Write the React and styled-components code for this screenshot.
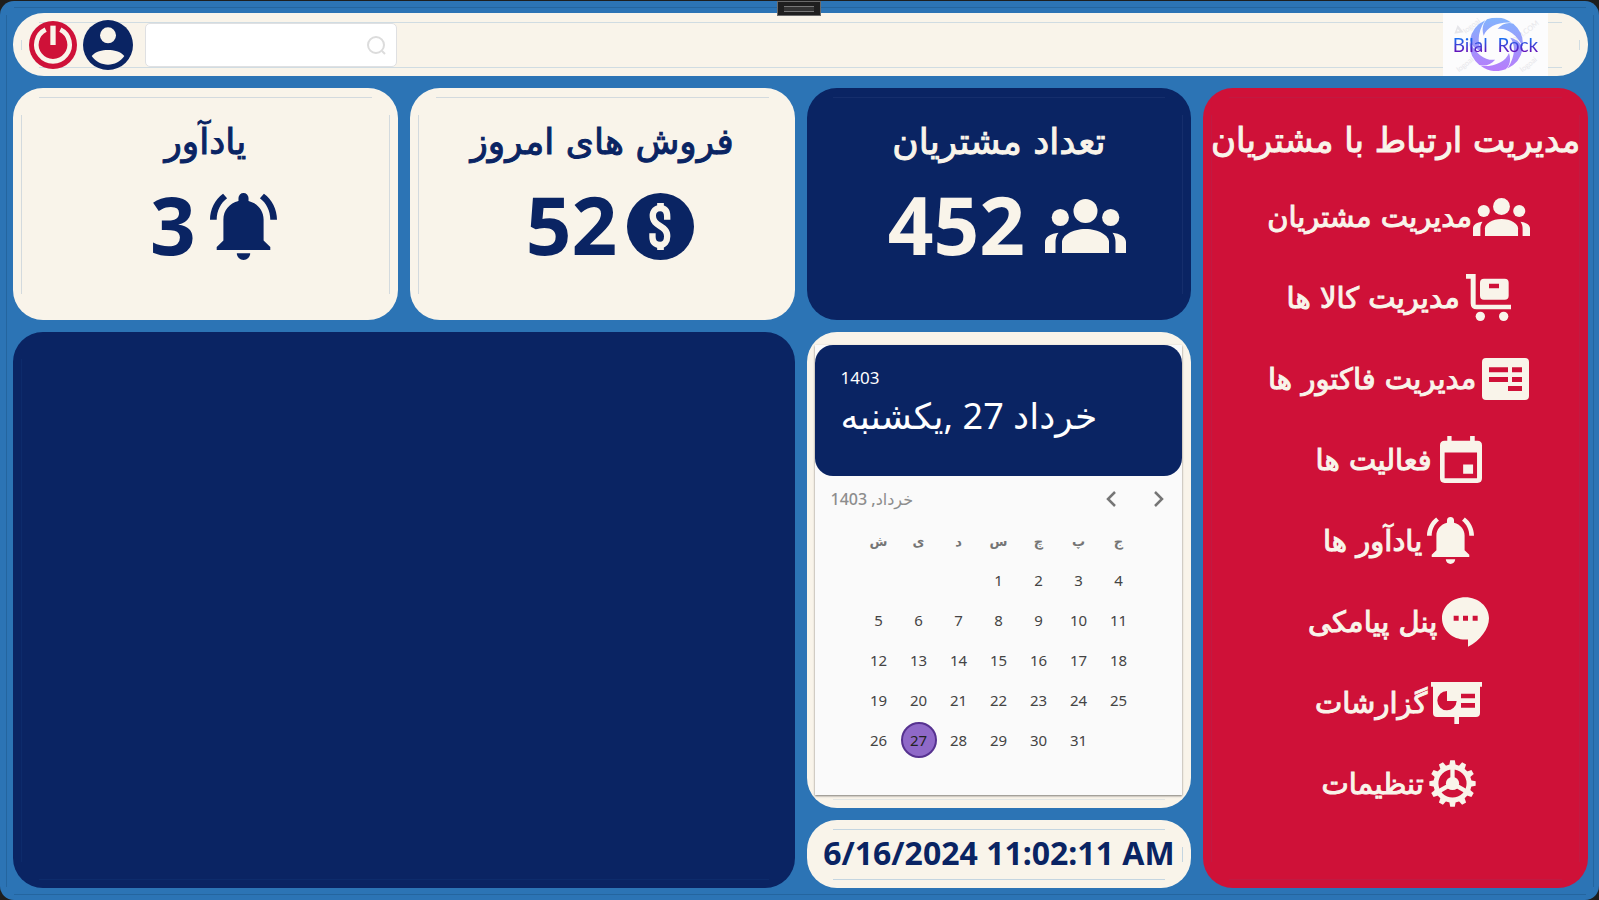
import React from "react";
import styled, { createGlobalStyle, css } from "styled-components";

const blue = "#2c74b5";
const navy = "#0a2463";
const cream = "#f9f4ea";
const red = "#cf1138";
const latin = `"Noto Sans", "Open Sans", "DejaVu Sans", sans-serif`;

const GlobalStyle = createGlobalStyle`
  * { box-sizing: border-box; }
  html { background: #1e1e1e; }
  body { margin: 0; font-family: ${latin}; }
  button { border: 0; padding: 0; background: none; font: inherit; color: inherit; cursor: pointer; }
  svg { display: block; }
`;

const hair = (color, size) => `linear-gradient(${color}, ${color}) no-repeat ${size}`;

const edgeLines = ({ $line, $edges = "tblr" }) => {
  const across = "calc(100% - 36px) 1px";
  const down = "1px calc(100% - 36px)";
  const at = {
    t: hair($line, `center top / ${across}`),
    b: hair($line, `center bottom / ${across}`),
    l: hair($line, `left center / ${down}`),
    r: hair($line, `right center / ${down}`),
  };
  return css`
    &::before {
      content: "";
      position: absolute;
      inset: 9px 8px 8px;
      pointer-events: none;
      background: ${[...$edges].map((e) => at[e]).join(", ")};
    }
  `;
};

const Shell = styled.div`
  position: relative;
  min-height: calc(100vh - 1px);
  margin-top: 1px;
  padding: 12px 11px 12px 13px;
  border-radius: 14px;
  background: ${blue};
  display: grid;
  grid-template-columns: repeat(4, minmax(0, 1fr));
  grid-template-rows: 63px 232px minmax(476px, 1fr) 68px;
  gap: 12px;
  &::after {
    content: "";
    position: absolute;
    inset: 6px 5px 5px 6px;
    pointer-events: none;
    background: ${hair("#24659f", "center top / calc(100% - 16px) 1px")},
      ${hair("#24659f", "center bottom / calc(100% - 16px) 1px")},
      ${hair("#24659f", "left center / 1px calc(100% - 16px)")},
      ${hair("#24659f", "right center / 1px calc(100% - 16px)")};
  }
`;

const Grip = styled.div`
  position: absolute;
  top: 0;
  left: calc(50% - 23px);
  z-index: 2;
  width: 44px;
  height: 15px;
  border: 1px solid #6a6a6a;
  background: #1f1f1f;
  display: grid;
  place-items: center;
  &::after {
    content: "";
    width: 30px;
    height: 4px;
    border: solid #777;
    border-width: 1px 0;
    background: #333;
  }
`;

const Panel = styled.section`
  position: relative;
  border-radius: 30px;
  background: ${(p) => p.$bg};
  color: ${(p) => p.$fg};
  ${edgeLines}
`;

const Header = styled.header`
  grid-column: 1 / -1;
  position: relative;
  border-radius: 31px;
  background: ${cream};
  padding: 0 40px 0 16px;
  display: flex;
  align-items: center;
  gap: 6px;
  ${edgeLines}
`;

const IconButton = styled.button`
  position: relative;
  flex: none;
  svg { width: ${(p) => p.$size}px; height: ${(p) => p.$size}px; }
`;

const SearchBox = styled.label`
  position: relative;
  display: flex;
  align-items: center;
  width: 252px;
  height: 44px;
  margin: 0 auto 0 6px;
  padding: 0 8px;
  border: 1px solid #dfe0e2;
  border-radius: 5px;
  background: #fff;
  input { flex: 1; min-width: 0; border: 0; outline: 0; background: none; font: 16px ${latin}; }
`;

const Logo = styled.div`
  position: relative;
  width: 105px;
  height: 63px;
  background: #fcfcfd;
  display: grid;
  place-items: center;
  svg { position: absolute; inset: 0; }
`;

const LogoName = styled.span`
  position: relative;
  font: 19px/24px Lato, sans-serif;
  white-space: pre;
  color: transparent;
  background: linear-gradient(#1673f5 20%, #6610b8 80%);
  background-clip: text;
`;

const StatPanel = styled(Panel)`
  display: flex;
  flex-direction: column;
  align-items: center;
  padding-top: 24px;
`;

const StatTitle = styled.h2`
  margin: 0;
  font: 36px/60px "DejaVu Sans", sans-serif;
  -webkit-text-stroke: 1px currentColor;
  white-space: nowrap;
`;

const StatRow = styled.div`
  height: 108px;
  display: flex;
  align-items: center;
  gap: ${(p) => p.$gap}px;
  padding-left: 16px;
`;

const StatNumber = styled.span`
  padding-bottom: 4px;
  font: bold 80px/104px ${latin};
`;

const Sidebar = styled(Panel).attrs({ as: "nav" })`
  grid-column: 4;
  grid-row: 2 / 5;
  padding-top: 22px;
  display: flex;
  flex-direction: column;
  align-items: center;
`;

const SidebarTitle = styled.h1`
  margin: 0 0 6px;
  font: 34px/60px "DejaVu Sans", sans-serif;
  -webkit-text-stroke: 1px currentColor;
  white-space: nowrap;
`;

const MenuItem = styled.button`
  height: 81px;
  padding-left: 6px;
  display: flex;
  align-items: center;
  gap: ${(p) => p.$gap}px;
  font: 29px/40px "DejaVu Sans", sans-serif;
  -webkit-text-stroke: 1px currentColor;
  white-space: nowrap;
`;

const CalendarPanel = styled(Panel)`
  grid-column: 3;
  padding: 13px 9px 13px 8px;
`;

const Calendar = styled.div`
  position: relative;
  height: 450px;
  background: #fafafa;
  box-shadow: 0 1px 2px rgba(0, 0, 0, 0.5);
  color: #444;
`;

const CalendarHead = styled.div`
  height: 131px;
  padding: 20px 26px;
  border-radius: 18px;
  background: ${navy};
  color: #fff;
`;

const Year = styled.div`
  font: 17px/26px ${latin};
`;

const FullDate = styled.div`
  width: max-content;
  direction: rtl;
  font: 36px/50px "Noto Sans", "DejaVu Sans", sans-serif;
  white-space: nowrap;
`;

const MonthBar = styled.div`
  height: 46px;
  padding: 0 16px;
  display: flex;
  align-items: center;
  gap: 30px;
  color: #8d8d8d;
  strong { direction: rtl; margin-right: auto; font: 500 16px/24px ${latin}; }
`;

const Days = styled.table`
  width: 280px;
  margin: 0 auto 0 44px;
  border-collapse: collapse;
  table-layout: fixed;
  th { height: 38px; padding: 0; font: bold 13px/20px ${latin}; color: #757575; }
  td { height: 40px; padding: 0; text-align: center; font: 15px/20px ${latin}; }
`;

const Today = styled.span`
  display: grid;
  place-items: center;
  width: 36px;
  height: 36px;
  margin: auto;
  border: 2px solid #563290;
  border-radius: 50%;
  background: #8f69c8;
  color: #222;
`;

const Clock = styled(Panel)`
  grid-column: 3;
  display: grid;
  place-items: center;
  padding-bottom: 2px;
  font: bold 32px/40px ${latin};
  white-space: nowrap;
`;

const Chart = styled(Panel)`
  grid-column: 1 / 3;
  grid-row: 3 / 5;
`;

const People = ({ w = 81 }) => (
  <svg width={w} height={(w * 2) / 3} viewBox="0 0 81 54" fill="currentColor" aria-hidden="true">
    <circle cx="40.5" cy="12" r="12" />
    <circle cx="15.3" cy="18.5" r="8.6" />
    <circle cx="65.7" cy="18.5" r="8.6" />
    <path d="M17 54V43C17 37 27 30 40.500 30S64 37 64 43V54Z" />
    <path d="M0 54V43C0 38 6 34.500 13.500 33.800C11.300 37 10.500 40 10.500 43V54Z" />
    <path d="M81 54V43C81 38 75 34.500 67.500 33.800C69.700 37 70.500 40 70.500 43V54Z" />
  </svg>
);

const Bell = ({ w = 67 }) => (
  <svg width={w} height={w} viewBox="0 0 200 200" fill="currentColor" aria-hidden="true">
    <path d="M85 24V15A15 15 0 0 1 115 15V24C142 31 160 52 160 79V142L180 161V170H20V161L40 142V79C40 52 58 31 85 24Z" />
    <path d="M80 180H120A20 20 0 0 1 80 180Z" />
    <path d="M0 80C0 49 15 19 39 2L51 16C32 30 20 54 20 80Z" />
    <path d="M200 80C200 49 185 19 161 2L149 16C168 30 180 54 180 80Z" />
  </svg>
);

const Coin = () => (
  <svg width="67" height="67" viewBox="0 0 200 200" aria-hidden="true">
    <circle cx="100" cy="100" r="100" fill={navy} />
    <path d="M90 30H110V50H90ZM90 150H110V170H90Z" fill={cream} />
    <path d="M120 80V70C120 51 111 45 99 45C86 45 77 54 77 68C77 102 120 95 120 129C120 145 112 155 99 155C84 155 76 146 76 131V120" fill="none" stroke={cream} strokeWidth="19" />
  </svg>
);

const Trolley = () => (
  <svg width="45" height="47" viewBox="0 0 135 141" fill="currentColor" aria-hidden="true">
    <path d="M0 0H29V92H135V106H32Q14 106 14 88V14H0Z" />
    <path fillRule="evenodd" d="M54 14H116Q128 14 128 26V65Q128 77 116 77H54Q42 77 42 65V26Q42 14 54 14ZM69 29V43H99V29Z" />
    <circle cx="43" cy="127" r="14" />
    <circle cx="113" cy="127" r="14" />
  </svg>
);

const Invoice = () => (
  <svg width="47" height="42" viewBox="0 0 141 126" fill="currentColor" aria-hidden="true">
    <path fillRule="evenodd" d="M12 0H129Q141 0 141 12V114Q141 126 129 126H12Q0 126 0 114V12Q0 0 12 0ZM21 28V43H78V28ZM90 28V43H120V28ZM21 57V72H78V57ZM90 57V72H120V57ZM78 84V99H120V84Z" />
  </svg>
);

const EventIcon = () => (
  <svg width="42" height="47" viewBox="0 0 127 142" fill="currentColor" aria-hidden="true">
    <path fillRule="evenodd" d="M22 0H35V14H91V0H105V14H113Q127 14 127 28V128Q127 142 113 142H14Q0 142 0 128V28Q0 14 14 14H22ZM14 50V128H112V50ZM70 86H100V114H70Z" />
  </svg>
);

const Chat = () => (
  <svg width="47" height="50" viewBox="0 0 141 149" fill="currentColor" aria-hidden="true">
    <path fillRule="evenodd" d="M70 0C109 0 141 28 141 63C141 95 115 129 78 149V127H70C31 127 0 98 0 63C0 28 31 0 70 0ZM35 56V71H50V56ZM63 56V71H78V56ZM92 56V71H107V56Z" />
  </svg>
);

const Board = () => (
  <svg width="51" height="42" viewBox="0 0 153 126" fill="currentColor" aria-hidden="true">
    <path fillRule="evenodd" d="M0 0H153V14H147V93Q147 105 135 105H84V126H70V105H18Q6 105 6 93V14H0ZM48 27A29 29 0 1 0 77 57H48ZM90 35V49H132V35ZM90 63V77H132V63Z" />
  </svg>
);

const Gear = () => (
  <svg width="47" height="47" viewBox="-71 -71 142 142" fill="none" stroke="currentColor" aria-hidden="true">
    <circle r="50" strokeWidth="15" />
    <circle r="20" fill="currentColor" stroke="none" />
    {[0, 120, 240].map((a) => (
      <path key={a} d="M0 -10V-48" strokeWidth="13" transform={`rotate(${a})`} />
    ))}
    {Array.from({ length: 12 }, (_, i) => (
      <path key={i} d="M-10 -54L-7 -70H7L10 -54Z" fill="currentColor" stroke="none" transform={`rotate(${i * 30})`} />
    ))}
  </svg>
);

const Power = () => (
  <svg viewBox="-72 -72 144 144" aria-hidden="true">
    <circle r="72" fill={red} />
    <path d="M-22 -46A50 50 0 1 0 22 -46" fill="none" stroke={cream} strokeWidth="14" />
    <path d="M-8 -58H8V0H-8Z" fill={cream} />
  </svg>
);

const User = () => (
  <svg viewBox="0 0 150 150" aria-hidden="true">
    <circle cx="75" cy="75" r="75" fill={navy} />
    <circle cx="75" cy="46" r="24" fill={cream} />
    <path d="M26 108C38 94 57 90 75 90S112 94 124 108C112 125 94 134 75 134S38 125 26 108Z" fill={cream} />
  </svg>
);

const Swirl = () => (
  <svg width="105" height="63" viewBox="0 0 315 189" aria-hidden="true">
    <defs>
      <linearGradient id="swirl" gradientUnits="userSpaceOnUse" x1="0" y1="-80" x2="0" y2="80">
        <stop offset="0" stopColor="#82b4fd" />
        <stop offset="1" stopColor="#b77dfb" />
      </linearGradient>
      <clipPath id="blades">
        {Array.from({ length: 6 }, (_, i) => (
          <path
            key={i}
            transform={`rotate(${i * 60})`}
            d="M-38 -26C-28 -52 5 -68 46 -65A80 80 0 0 0 -28 -75C-42 -62 -44 -44 -38 -26Z"
          />
        ))}
      </clipPath>
    </defs>
    <g fill="#e6e6ea" fontFamily="Lato" fontSize="22">
      <text transform="translate(68 62) rotate(-38)">logoai</text>
      <text transform="translate(214 92) rotate(-38)">OAI.COM</text>
      <text transform="translate(48 178) rotate(-38)">logoai</text>
      <text transform="translate(238 178) rotate(-38)">logoai</text>
      <path d="M34 62L44 36L62 58ZM44 48L50 55H42Z" fillRule="evenodd" />
    </g>
    <g transform="translate(160 94)">
      <rect x="-84" y="-84" width="168" height="168" fill="url(#swirl)" clipPath="url(#blades)" />
    </g>
  </svg>
);

const menu = [
  ["مدیریت مشتریان", <People w={57} />, 1],
  ["مدیریت کالا ها", <Trolley />, 6],
  ["مدیریت فاکتور ها", <Invoice />, 6],
  ["فعالیت ها", <EventIcon />, 8],
  ["یادآور ها", <Bell w={47} />, 5],
  ["پنل پیامکی", <Chat />, 5],
  ["گزارشات", <Board />, 4],
  ["تنظیمات", <Gear />, 5],
];

const weekdays = ["ش", "ی", "د", "س", "چ", "پ", "ج"];
const weeks = Array.from({ length: 5 }, (_, w) =>
  Array.from({ length: 7 }, (_, d) => {
    const n = w * 7 + d - 2;
    return n > 0 && n < 32 ? n : null;
  })
);

export default function App() {
  return (
    <>
      <GlobalStyle />
      <Shell>
        <Grip />
        <Header $line="#d0dce2">
          <IconButton $size={48} aria-label="خروج"><Power /></IconButton>
          <IconButton $size={50} aria-label="حساب کاربری"><User /></IconButton>
          <SearchBox>
            <input type="text" aria-label="جستجو" />
            <svg width="22" height="22" viewBox="0 0 22 22" fill="none" stroke="#dcdcdc" strokeWidth="2" aria-hidden="true">
              <circle cx="10" cy="11" r="8" />
              <path d="M16 17L19 20" />
            </svg>
          </SearchBox>
          <Logo>
            <Swirl />
            <LogoName>Bilal  Rock</LogoName>
          </Logo>
        </Header>

        <StatPanel $bg={cream} $fg={navy} $line="#d3dade" $edges="tlr">
          <StatTitle dir="rtl">یادآور</StatTitle>
          <StatRow $gap={14}>
            <StatNumber>3</StatNumber>
            <Bell />
          </StatRow>
        </StatPanel>
        <StatPanel $bg={cream} $fg={navy} $line="#d3dade" $edges="tl">
          <StatTitle dir="rtl">فروش های امروز</StatTitle>
          <StatRow $gap={10}>
            <StatNumber>52</StatNumber>
            <Coin />
          </StatRow>
        </StatPanel>
        <StatPanel $bg={navy} $fg={cream} $line="#152e6c" $edges="tr">
          <StatTitle dir="rtl">تعداد مشتریان</StatTitle>
          <StatRow $gap={20}>
            <StatNumber>452</StatNumber>
            <People />
          </StatRow>
        </StatPanel>

        <Sidebar $bg={red} $fg={cream} $line="#c11a42">
          <SidebarTitle dir="rtl">مدیریت ارتباط با مشتریان</SidebarTitle>
          {menu.map(([label, icon, gap]) => (
            <MenuItem key={label} $gap={gap} dir="rtl" type="button">
              {icon}
              <span>{label}</span>
            </MenuItem>
          ))}
        </Sidebar>

        <Chart $bg={navy} $fg={cream} $line="#0d2b6b" $edges="bl" />

        <CalendarPanel $bg={cream} $fg={navy} $line="#e2e5e3" $edges="b">
          <Calendar>
            <CalendarHead>
              <Year>1403</Year>
              <FullDate>خرداد 27 ,یکشنبه</FullDate>
            </CalendarHead>
            <MonthBar>
              <strong>خرداد, 1403</strong>
              <button type="button" aria-label="ماه قبل">
                <svg width="16" height="16" viewBox="0 0 16 16" fill="none" stroke="#757575" strokeWidth="2.5"><path d="M11 1L4 8L11 15" /></svg>
              </button>
              <button type="button" aria-label="ماه بعد">
                <svg width="16" height="16" viewBox="0 0 16 16" fill="none" stroke="#757575" strokeWidth="2.5"><path d="M5 1L12 8L5 15" /></svg>
              </button>
            </MonthBar>
            <Days>
              <thead>
                <tr>{weekdays.map((d) => <th key={d} scope="col">{d}</th>)}</tr>
              </thead>
              <tbody>
                {weeks.map((week, i) => (
                  <tr key={i}>
                    {week.map((n, j) => <td key={j}>{n === 27 ? <Today>{n}</Today> : n}</td>)}
                  </tr>
                ))}
              </tbody>
            </Days>
          </Calendar>
        </CalendarPanel>

        <Clock $bg={cream} $fg={navy} $line="#c4d5e0" $edges="tbr">6/16/2024 11:02:11 AM</Clock>
      </Shell>
    </>
  );
}
